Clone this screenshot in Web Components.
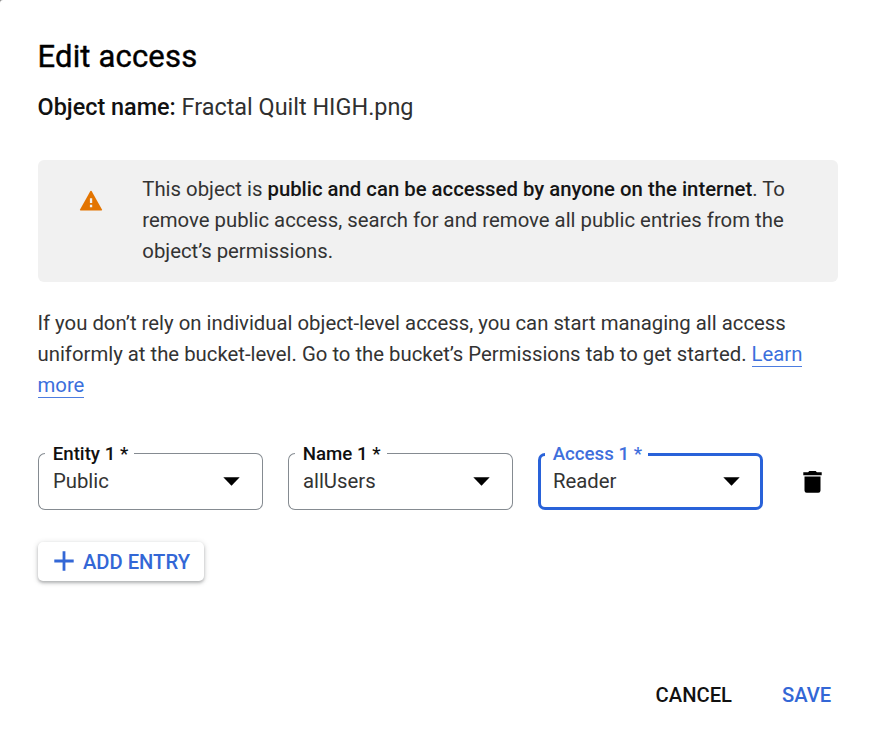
<!DOCTYPE html>
<html lang="en">
<head>
<meta charset="utf-8">
<title>Edit access</title>
<style>
html, body { margin: 0; height: 100%; overflow: hidden; }
body { background: linear-gradient(135deg, #8a8a8a 0 6px, #fff 6px); font-family: Roboto, sans-serif; color: #303030; }
</style>
</head>
<body>
<access-dialog></access-dialog>
<script>
const define = (name, html, setup) => {
  const template = document.createElement('template');
  template.innerHTML = html;
  customElements.define(name, class extends HTMLElement {
    connectedCallback() {
      if (this.shadowRoot) return;
      const root = this.attachShadow({ mode: 'open' });
      root.append(template.content.cloneNode(true));
      if (setup) setup(this, root);
    }
  });
};

define('warning-banner', `
<style>
:host { display: flex; box-sizing: border-box; height: 122.3px; background: #f1f1f1; border-radius: 6px; padding: 13.8px 40px 0 41.3px; }
svg { width: 24px; height: 25px; margin-top: 14px; margin-right: 39.5px; flex: none; }
p { margin: 0; white-space: nowrap; }
</style>
<svg viewBox="0 0 24 24"><path fill="#e37400" d="M.9 21.2 Q.7 22 1.7 22 H22.3 Q23.3 22 23.1 21.2 L12.6 2.6 Q12 1.8 11.4 2.6 Z"/><path fill="#f1f1f1" d="M10.9 9.8h2.3v4.6h-2.3zM10.9 16.3h2.3v2.4h-2.3z"/></svg>
<p><slot></slot></p>`);

define('text-link', `
<style>
a { color: #3b6fdc; text-decoration: none; border-bottom: 1.5px solid #4d7de0; padding-bottom: 0; }
</style><a><slot></slot></a>`);

define('select-field', `
<style>
:host { --line: #858b91; --w: 1.5px; display: block; position: relative; box-sizing: border-box; width: 225px; height: 56.5px; }
:host([focused]) { --line: #2962d9; --w: 3.2px; }
.outline { position: absolute; inset: 0; display: flex; }
.outline > div { box-sizing: border-box; border: var(--w) solid var(--line); }
.lead { width: 7.4px; border-right: 0 !important; border-radius: 7px 0 0 7px; }
.notch { border-width: 0 0 var(--w) !important; padding: 0 6px 0 7.8px; }
.trail { flex: 1; border-left: 0 !important; border-radius: 0 7px 7px 0; }
label { display: block; white-space: nowrap; margin-top: -11.4px; font: 500 18.7px/24px Roboto, sans-serif; color: #101010; }
:host([focused]) label { color: #3f6fdc; }
.value { display: flex; align-items: center; justify-content: space-between; height: 100%; box-sizing: border-box; padding: 0 22.2px 0 15.4px; }
.value span { line-height: 24px; margin-top: -1px; }
svg { width: 17px; height: 9px; display: block; }
</style>
<div class="outline"><div class="lead"></div><div class="notch"><label></label></div><div class="trail"></div></div>
<div class="value"><span><slot></slot></span><svg viewBox="0 0 17 9"><path d="M.3.3h16.4L8.5 8.7z"/></svg></div>`,
(host, root) => { root.querySelector('label').textContent = host.getAttribute('label'); });

define('add-button', `
<style>
:host { display: inline-flex; }
button { all: unset; display: flex; align-items: center; box-sizing: border-box; width: 166.6px; height: 39px; padding-left: 16.4px; background: #fff; border-radius: 5px; color: #3367d6; font: 500 20.2px/24px Roboto, sans-serif; white-space: nowrap;
  box-shadow: 0 2px 3px rgba(60,64,67,.3), 0 1px 5px 1px rgba(60,64,67,.15); }
svg { width: 20px; height: 20px; margin-right: 9px; }
span { margin-top: 1px; }
</style>
<button><svg viewBox="0 0 20 20"><path fill="#3367d6" d="M8.6.3h2.8v8.3H19.7v2.8H11.4v8.3H8.6v-8.3H.3V8.6h8.3z"/></svg><span><slot></slot></span></button>`);

define('delete-button', `
<style>
:host { display: block; }
svg { display: block; width: 19px; height: 22px; }
</style>
<svg viewBox="0 0 19 22"><path d="M6.3 0h6.4l1.2 1.3h4.8v2.9H.3V1.3h4.8zM1.5 5.6h16v14q0 2.2-2.2 2.2H3.7q-2.2 0-2.2-2.2z"/></svg>`);

define('action-button', `
<style>
:host { display: block; font: 500 20.2px/24px Roboto, sans-serif; color: #111; }
:host([primary]) { color: #3367d6; }
button { all: unset; display: block; }
</style><button><slot></slot></button>`);

define('access-dialog', `
<style>
:host { display: flex; flex-direction: column; box-sizing: border-box; width: 873px; height: 746px; padding: 38px 35.5px 0 37.5px; background: #fff; border-radius: 3px 0 0 0; font: 400 20.32px/31.25px Roboto, sans-serif; color: #333; }
h1 { margin: 0; font: 400 31px/38px Roboto, sans-serif; letter-spacing: .17px; color: #000; -webkit-text-stroke: .4px #000; }
h2 { margin: 16px 0 36.5px; font: 400 23.42px/31.5px Roboto, sans-serif; color: #303030; }
h2 b { font-weight: 500; color: #111; }
b { font-weight: 500; color: #151515; }
p { margin: 25.4px 0 0; height: 94px; white-space: nowrap; }
.row { display: flex; gap: 25px; align-items: center; margin-top: 51.7px; }
delete-button { margin: 1px 0 0 15.8px; }
add-button { margin-top: 32px; }
footer { display: flex; justify-content: flex-end; gap: 50px; margin-top: 102px; padding-right: 6.3px; }
</style>
<h1>Edit access</h1>
<h2><b>Object name:</b> Fractal Quilt HIGH.png</h2>
<warning-banner style="width:800px">This object is <b>public and can be accessed by anyone on the internet</b>. To<br>remove public access, search for and remove all public entries from the<br>object’s permissions.</warning-banner>
<p>If you don’t rely on individual object-level access, you can start managing all access<br>uniformly at the bucket-level. Go to the bucket’s Permissions tab to get started. <text-link>Learn<br>more</text-link></p>
<div class="row">
<select-field label="Entity 1 *">Public</select-field>
<select-field label="Name 1 *">allUsers</select-field>
<select-field label="Access 1 *" focused>Reader</select-field>
<delete-button></delete-button>
</div>
<div><add-button>ADD ENTRY</add-button></div>
<footer><action-button>CANCEL</action-button><action-button primary>SAVE</action-button></footer>`);
</script>
</body>
</html>
